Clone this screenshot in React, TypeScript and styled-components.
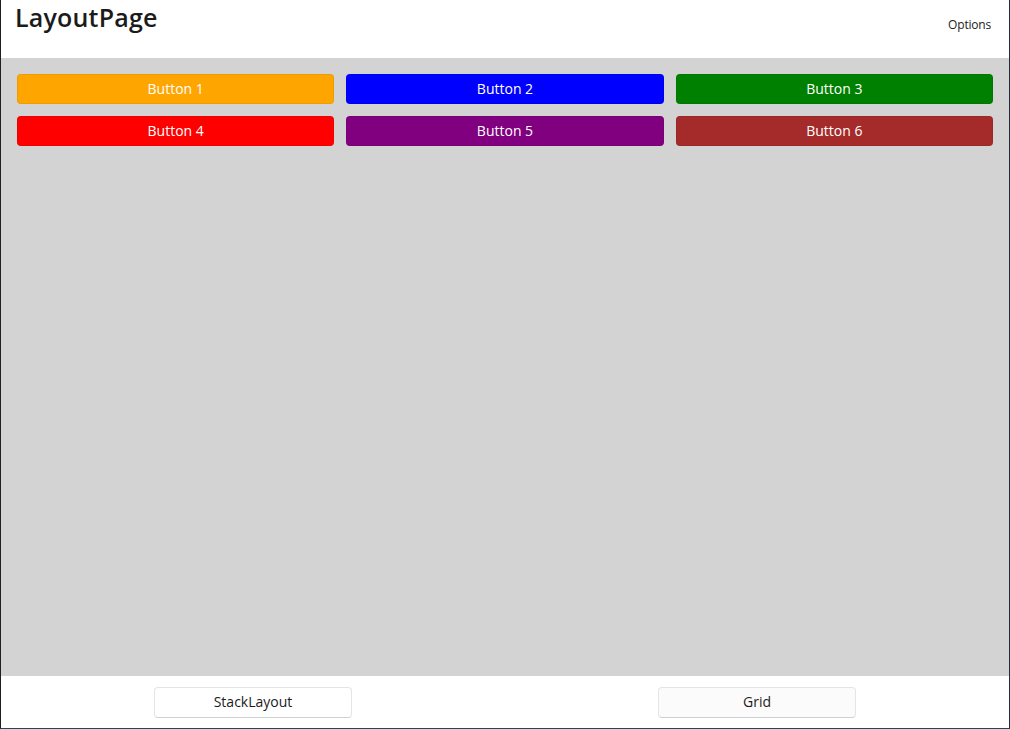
import styled, { createGlobalStyle } from "styled-components"

const GlobalStyle = createGlobalStyle`
    html, body {
        margin: 0;
        padding: 0;
        background: #ffffff;
        font-family: "Segoe UI", "Open Sans", "Noto Sans", sans-serif;
    }
    * { box-sizing: border-box; }
`

const tiles = [
    { label: "Button 1", color: "orange" },
    { label: "Button 2", color: "blue" },
    { label: "Button 3", color: "green" },
    { label: "Button 4", color: "red" },
    { label: "Button 5", color: "purple" },
    { label: "Button 6", color: "brown" },
]

export default function App() {
    return (
        <>
            <GlobalStyle />
            <Window>
                <Header>
                    <PageTitle>LayoutPage</PageTitle>
                    <ToolbarItem>Options</ToolbarItem>
                </Header>
                <Content>
                    <ButtonGrid>
                        {tiles.map(t => (
                            <ColorButton key={t.label} $color={t.color}>{t.label}</ColorButton>
                        ))}
                    </ButtonGrid>
                </Content>
                <TabBar>
                    <TabCell>
                        <TabButton>StackLayout</TabButton>
                    </TabCell>
                    <TabCell>
                        <TabButton $soft>Grid</TabButton>
                    </TabCell>
                </TabBar>
            </Window>
        </>
    )
}

const Window = styled.div`
    width: 1010px;
    height: 729px;
    display: flex;
    flex-direction: column;
    border-left: 1px solid #1f1f1f;
    border-right: 1px solid #1f2f3f;
    border-bottom: 1px solid #1b4a63;
    background: #ffffff;
`

const Header = styled.header`
    height: 58px;
    display: flex;
    justify-content: space-between;
    align-items: flex-start;
    padding: 0 18px 0 14px;
`

const PageTitle = styled.h1`
    margin: 0;
    padding-top: 1px;
    font-size: 25px;
    font-weight: 600;
    letter-spacing: 0.2px;
    color: #1b1b1b;
    line-height: 32px;
`

const ToolbarItem = styled.span`
    font-size: 12px;
    letter-spacing: -0.2px;
    color: #1b1b1b;
    padding-top: 16px;
`

const Content = styled.main`
    flex: 1;
    background: #d3d3d3;
    padding: 16px 16px;
`

const ButtonGrid = styled.div`
    display: grid;
    grid-template-columns: repeat(3, 1fr);
    column-gap: 12px;
    row-gap: 12px;
`

const ColorButton = styled.button<{ $color: string }>`
    height: 30px;
    border: 1px solid rgba(0, 0, 0, 0.06);
    border-radius: 4px;
    background: ${({ $color }) => $color};
    color: #ffffff;
    font-family: inherit;
    font-size: 14px;
    padding: 0 0 2px;
`

const TabBar = styled.footer`
    height: 52px;
    display: grid;
    grid-template-columns: 1fr 1fr;
    background: #ffffff;
`

const TabCell = styled.div`
    display: flex;
    justify-content: center;
    align-items: center;
`

const TabButton = styled.button<{ $soft?: boolean }>`
    width: 198px;
    height: 31px;
    border: 1px solid #e5e5e5;
    border-bottom-color: #d0d0d0;
    border-radius: 4px;
    background: ${({ $soft }) => ($soft ? "#fbfbfb" : "#ffffff")};
    color: #1b1b1b;
    font-family: inherit;
    font-size: 14px;
    padding: 0 0 1px;
`
